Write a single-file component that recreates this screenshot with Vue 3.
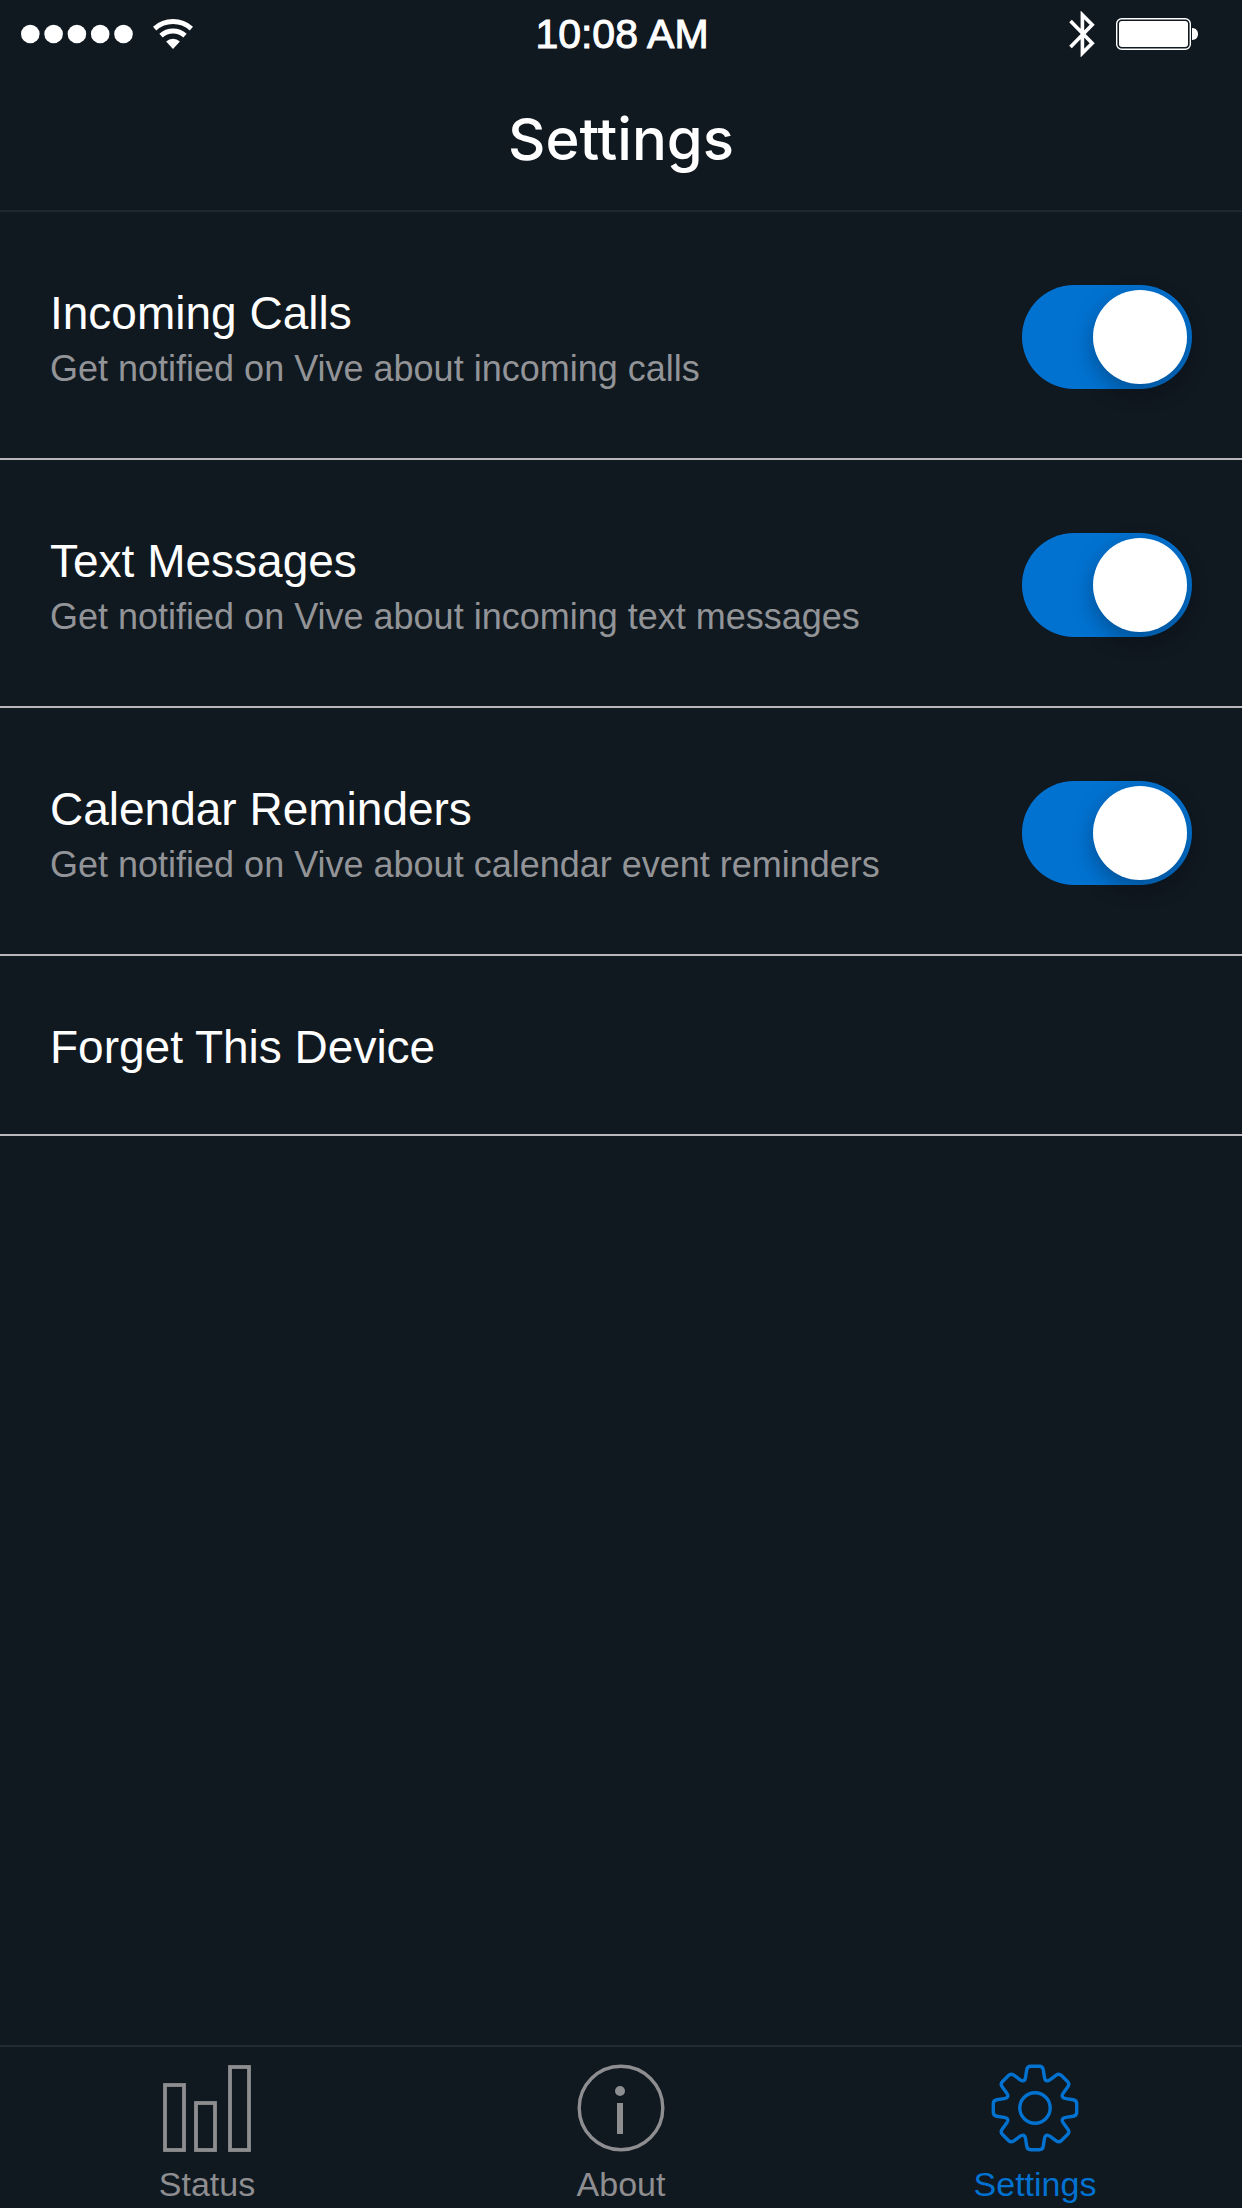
<script setup>
import { ref } from 'vue'

const notifications = ref([
  {
    id: 'calls',
    title: 'Incoming Calls',
    text: 'Get notified on Vive about incoming calls',
    enabled: true,
  },
  {
    id: 'messages',
    title: 'Text Messages',
    text: 'Get notified on Vive about incoming text messages',
    enabled: true,
  },
  {
    id: 'calendar',
    title: 'Calendar Reminders',
    text: 'Get notified on Vive about calendar event reminders',
    enabled: true,
  },
])

const activeTab = ref('settings')

function polar(radius, degrees) {
  const angle = (degrees * Math.PI) / 180
  return [44 + radius * Math.sin(angle), 44 - radius * Math.cos(angle)]
}

// point on the way from a to b, at the given distance from a
function towards(a, b, distance) {
  const ratio = distance / Math.hypot(b[0] - a[0], b[1] - a[1])
  return [a[0] + (b[0] - a[0]) * ratio, a[1] + (b[1] - a[1]) * ratio]
}

// eight teeth with rounded corners
function gearPath() {
  const points = []
  for (let i = 0; i < 8; i++) {
    const turn = i * 45
    points.push({ at: polar(42.4, turn - 10.5), round: 3.5 })
    points.push({ at: polar(42.4, turn + 10.5), round: 3.5 })
    points.push({ at: polar(27, turn + 22.5), round: 6 })
  }

  const parts = points.map(({ at, round }, i) => {
    const prev = points[(i + points.length - 1) % points.length].at
    const next = points[(i + 1) % points.length].at
    const start = towards(at, prev, round)
    const end = towards(at, next, round)
    return `${i ? 'L' : 'M'}${start} Q${at} ${end}`
  })

  return parts.join(' ') + 'Z'
}

const gear = gearPath()
</script>

<template>
  <div class="screen">
    <div class="status-bar">
      <div class="signal">
        <svg width="112" height="20" viewBox="0 0 112 20" fill="currentColor">
          <circle v-for="n in 5" :key="n" :cx="9.3 + (n - 1) * 23.3" cy="10" r="9.3" />
        </svg>
        <svg width="40" height="30" viewBox="0 0 40 30" fill="none" stroke="currentColor" stroke-width="5">
          <path d="M1.6 9.6A27.5 27.5 0 0 1 38.4 9.6" />
          <path d="M8 16.6A18 18 0 0 1 32 16.6" />
          <path d="M20 30L13.1 22.4A10.3 10.3 0 0 1 26.9 22.4Z" fill="currentColor" stroke="none" />
        </svg>
      </div>
      <time class="time">10:08 AM</time>
      <div class="power">
        <svg width="26" height="46" viewBox="0 0 26 46" fill="none" stroke="currentColor" stroke-width="3.6">
          <path d="M1.5 10L23.2 32.3L13.4 42.1V3.9L23.2 13.7L1.5 36" />
        </svg>
        <svg width="82" height="32" viewBox="0 0 82 32" fill="currentColor">
          <rect x="0.7" y="0.7" width="73.6" height="30.6" rx="5" fill="none" stroke="currentColor" stroke-width="1.4" />
          <rect x="3" y="3" width="69" height="26" rx="3" />
          <path d="M76 10C80 10 82 13 82 16S80 22 76 22Z" />
        </svg>
      </div>
    </div>

    <header class="header">
      <h1>Settings</h1>
    </header>

    <main class="content">
      <label v-for="item in notifications" :key="item.id" class="row" :for="item.id">
        <span class="row-text">
          <span class="row-title">{{ item.title }}</span>
          <span class="row-sub">{{ item.text }}</span>
        </span>
        <input :id="item.id" v-model="item.enabled" type="checkbox" role="switch" class="toggle" />
      </label>
      <button type="button" class="forget">Forget This Device</button>
    </main>

    <nav class="tabs">
      <a href="#status" class="tab" :class="{ active: activeTab === 'status' }" @click.prevent="activeTab = 'status'">
        <svg width="88" height="88" viewBox="0 0 88 88" fill="none" stroke="currentColor" stroke-width="3.8">
          <rect x="2" y="21" width="19" height="65" />
          <rect x="33" y="39" width="19" height="47" />
          <rect x="67" y="3" width="19" height="83" />
        </svg>
        Status
      </a>
      <a href="#about" class="tab" :class="{ active: activeTab === 'about' }" @click.prevent="activeTab = 'about'">
        <svg width="88" height="88" viewBox="0 0 88 88" fill="currentColor">
          <circle cx="44" cy="44" r="41.8" fill="none" stroke="currentColor" stroke-width="3.4" />
          <circle cx="43" cy="27" r="5" />
          <rect x="40" y="39" width="6" height="31" />
        </svg>
        About
      </a>
      <a
        href="#settings"
        class="tab"
        :class="{ active: activeTab === 'settings' }"
        @click.prevent="activeTab = 'settings'"
      >
        <svg width="88" height="88" viewBox="0 0 88 88" fill="none" stroke="currentColor" stroke-width="3.4">
          <path :d="gear" />
          <circle cx="44" cy="44" r="15.2" />
        </svg>
        Settings
      </a>
    </nav>
  </div>
</template>

<style>
body {
  background-color: #101820;
}
</style>

<style scoped>
.screen {
  display: flex;
  flex-direction: column;
  min-height: 100vh;
  background-color: #101820;
  color: #fff;
  font-family: 'Liberation Sans', Arial, sans-serif;
}

svg {
  display: block;
}

.status-bar {
  display: grid;
  grid-template-columns: 1fr auto 1fr;
  align-items: center;
  height: 68px;
  padding: 0 44px 0 21px;
}
.signal {
  display: flex;
  align-items: center;
  gap: 20px;
}
.time {
  padding-left: 25px;
  font-size: 41px;
  line-height: 68px;
  -webkit-text-stroke: 1px currentColor;
}
.power {
  display: flex;
  align-items: center;
  justify-content: flex-end;
  gap: 21px;
}

.header {
  border-bottom: 2px solid #1d2831;
  text-align: center;
}
.header h1 {
  margin: 0;
  font-family: Inter, sans-serif;
  font-size: 58px;
  font-weight: 500;
  line-height: 142px;
}

.content {
  flex: 1;
}
.row {
  display: flex;
  align-items: flex-start;
  justify-content: space-between;
  padding: 73px 50px 61px;
  border-bottom: 2px solid #bab7ba;
  cursor: pointer;
}
.row-text {
  display: flex;
  flex-direction: column;
}
.row-title,
.forget {
  font-size: 46px;
  line-height: 56px;
}
.row-sub {
  color: #929497;
  font-size: 36px;
  line-height: 56px;
}

.toggle {
  appearance: none;
  flex: none;
  width: 170px;
  height: 104px;
  margin: 0;
  padding: 5px;
  box-sizing: border-box;
  border-radius: 52px;
  background-color: #39424b;
  cursor: pointer;
}
.toggle::before {
  content: '';
  display: block;
  width: 94px;
  height: 94px;
  border-radius: 50%;
  background-color: #fff;
  box-shadow: 0 8px 22px rgba(0, 0, 0, 0.3);
}
.toggle:checked {
  background-color: #0272d1;
}
.toggle:checked::before {
  margin-left: auto;
}

.forget {
  display: block;
  width: 100%;
  padding: 63px 50px 59px;
  border: none;
  border-bottom: 2px solid #bab7ba;
  background: none;
  color: inherit;
  font-family: inherit;
  text-align: left;
  cursor: pointer;
}

.tabs {
  display: flex;
  border-top: 2px solid #222b33;
}
.tab {
  display: flex;
  flex: 1;
  flex-direction: column;
  align-items: center;
  gap: 8px;
  padding-top: 17px;
  color: #8e8e90;
  font-size: 34px;
  line-height: 48px;
  text-decoration: none;
}
.tab.active {
  color: #0272d1;
}
</style>
